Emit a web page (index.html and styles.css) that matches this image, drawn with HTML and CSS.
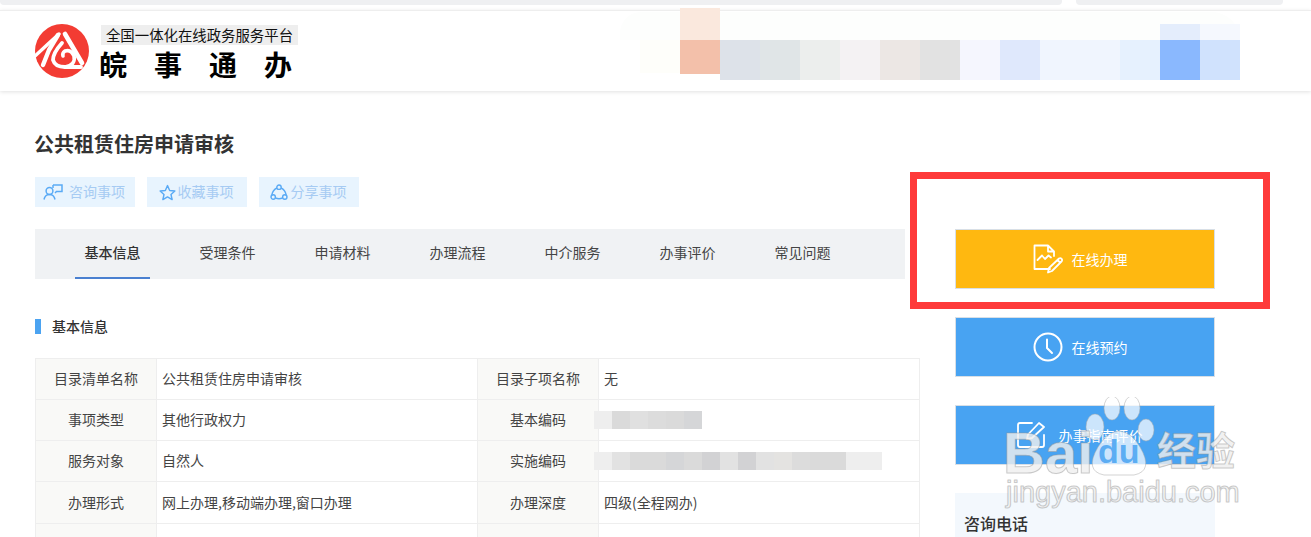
FILE: index.html
```html
<!DOCTYPE html>
<html lang="zh-CN">
<head>
<meta charset="utf-8">
<title>公共租赁住房申请审核</title>
<link rel="stylesheet" href="styles.css">
</head>
<body>
<div class="topbar"><div class="tb-a"></div><div class="tb-b"></div></div>
<header class="header">
  <svg class="logo" viewBox="0 0 54 54" width="54" height="54">
    <circle cx="27" cy="27" r="27" fill="#f33c33"/>
    <g fill="none" stroke="#fff" stroke-linejoin="round" stroke-linecap="round">
      <path d="M0 32 L13 20 L24 10" stroke-width="3.4"/>
      <path d="M23 11 L14 26 L8 41" stroke-width="4.4"/>
      <path d="M30 10 L47 39" stroke-width="4.6"/>
      <path d="M27 19 Q18 29 18 36 Q20 43 30 43 L46 43" stroke-width="3.8"/>
      <path d="M30 43 Q41 41 39 32 Q36 25 30 27 Q27 29 28 32" stroke-width="3.6"/>
    </g>
  </svg>
  <div class="brand">
    <div class="brand-sub">全国一体化在线政务服务平台</div>
    <div class="brand-name">皖事通办</div>
  </div>
</header>

<div class="mosaic">
  <div class="m-halo"></div>
  <div class="m-halo2"></div>
  <div class="m-top1"></div>
  <div class="m-top2"></div>
  <div class="m-top3"></div>
  <div class="m-b m1"></div><div class="m-b m2"></div><div class="m-b m3"></div><div class="m-b m4"></div>
  <div class="m-b m5"></div><div class="m-b m6"></div><div class="m-b m7"></div><div class="m-b m8"></div>
  <div class="m-b m9"></div><div class="m-b m10"></div><div class="m-b m11"></div><div class="m-b m12"></div>
  <div class="m-b m13"></div><div class="m-b m14"></div>
</div>

<main class="main">
  <section class="content">
    <h1 class="title">公共租赁住房申请审核</h1>
    <div class="actions">
      <a class="action a1">
        <svg viewBox="0 0 20 16" width="20" height="16" fill="none" stroke="#5aaaf5" stroke-width="1.5">
          <circle cx="6.5" cy="7" r="3.4"/>
          <path d="M1 15.5 Q2 10.5 6.5 10.5 Q11 10.5 12 15.5"/>
          <path d="M10 1 H19 V7.5 H13.5 L12 9 M10 1 V4"/>
        </svg>
        <span>咨询事项</span>
      </a>
      <a class="action a2">
        <svg viewBox="0 0 18 17" width="17" height="17" fill="none" stroke="#5aaaf5" stroke-width="1.5" stroke-linejoin="round">
          <path d="M9 1.2 L11.3 6.3 L16.8 6.9 L12.7 10.6 L13.9 16 L9 13.2 L4.1 16 L5.3 10.6 L1.2 6.9 L6.7 6.3 Z"/>
        </svg>
        <span>收藏事项</span>
      </a>
      <a class="action a3">
        <svg viewBox="0 0 18 17" width="18" height="17" fill="none" stroke="#5aaaf5" stroke-width="1.4">
          <circle cx="9" cy="3.2" r="2.2"/>
          <circle cx="3.2" cy="13" r="2.2"/>
          <circle cx="14.8" cy="13" r="2.2"/>
          <path d="M6.9 4 Q2.8 6 1.8 11 M11.1 4 Q15.2 6 16.2 11 M5.4 14 Q9 15.4 12.6 14"/>
        </svg>
        <span>分享事项</span>
      </a>
    </div>
    <nav class="tabs">
      <a class="tab active">基本信息</a>
      <a class="tab">受理条件</a>
      <a class="tab">申请材料</a>
      <a class="tab">办理流程</a>
      <a class="tab">中介服务</a>
      <a class="tab">办事评价</a>
      <a class="tab">常见问题</a>
    </nav>
    <h2 class="section">基本信息</h2>
    <table class="info">
      <colgroup><col class="c-l"><col class="c-v"><col class="c-l"><col class="c-v"></colgroup>
      <tr><th>目录清单名称</th><td>公共租赁住房申请审核</td><th>目录子项名称</th><td>无</td></tr>
      <tr><th>事项类型</th><td>其他行政权力</td><th>基本编码</th><td>
        <div class="blur"><i class="g1"></i><i class="g2"></i><i class="g3"></i><i class="g4"></i><i class="g2"></i><i class="g5"></i></div>
      </td></tr>
      <tr><th>服务对象</th><td>自然人</td><th>实施编码</th><td>
        <div class="blur"><i class="g1"></i><i class="g6"></i><i class="g2"></i><i class="g2"></i><i class="g5"></i><i class="g2"></i><i class="g7"></i><i class="g6"></i><i class="g7"></i><i class="g6"></i><i class="g8"></i><i class="g4"></i><i class="g2"></i><i class="g2"></i><i class="g1"></i><i class="g1"></i></div>
      </td></tr>
      <tr class="r4"><th>办理形式</th><td>网上办理,移动端办理,窗口办理</td><th>办理深度</th><td>四级(全程网办)</td></tr>
      <tr><th></th><td></td><th></th><td></td></tr>
    </table>
  </section>

  <aside class="side">
    <a class="btn btn-yellow">
      <svg viewBox="0 0 30 30" width="30" height="30" fill="none" stroke="#fff" stroke-width="1.8" stroke-linejoin="round" stroke-linecap="round">
        <path d="M17 25 H1.5 V1.5 H15 L21 7.5 V12 M15 1.5 V7.5 H21"/>
        <path d="M4.5 16 L9 11.5 L12 15 L15.5 11.5 L18 13.5"/>
        <path d="M15 28.5 L16 24 L26 14.5 Q27.5 13.5 28.8 15 Q29.5 16.5 28.5 17.5 L19 27 Z M24.5 16 L27 18.5"/>
      </svg>
      <span>在线办理</span>
    </a>
    <a class="btn btn-blue">
      <svg viewBox="0 0 30 30" width="30" height="30" fill="none" stroke="#fff" stroke-linecap="round" stroke-linejoin="round">
        <circle cx="15" cy="15" r="13.5" stroke-width="2"/>
        <path d="M14 7.5 V16 L19 21" stroke-width="2"/>
      </svg>
      <span>在线预约</span>
    </a>
    <a class="btn btn-blue btn-wide">
      <svg viewBox="0 0 28 28" width="28" height="28" fill="none" stroke="#fff" stroke-width="1.8" stroke-linejoin="round" stroke-linecap="round">
        <path d="M15 2 H3 Q1 2 1 4 V24 Q1 26 3 26 H25 Q27 26 27 24 V14"/>
        <path d="M10 18 L11 13.5 L22 2 L27 6 L15 17 Z"/>
      </svg>
      <span>办事指南评价</span>
    </a>
    <div class="panel"><h3>咨询电话</h3></div>
  </aside>
</main>

<div class="redbox"></div>

<div class="watermark">
  <svg class="paw" viewBox="0 0 72 84" width="72" height="84">
    <g fill="#fff" fill-opacity=".72" stroke="#aaa" stroke-opacity=".5">
      <ellipse cx="11" cy="30" rx="9" ry="13"/>
      <ellipse cx="28" cy="11" rx="8" ry="12"/>
      <ellipse cx="48" cy="11" rx="8" ry="12"/>
      <ellipse cx="62" cy="33" rx="8" ry="11"/>
      <path d="M36 34 Q48 36 56 50 Q70 74 50 78 L20 78 Q0 74 14 50 Q24 34 36 34 Z"/>
    </g>
  </svg>
  <span class="w-bai">Bai</span>
  <span class="w-du">du</span>
  <span class="w-cn">经验</span>
  <span class="w-url">jingyan.baidu.com</span>
</div>
</body>
</html>
```
FILE: styles.css
```css
html, body {
  margin: 0;
  height: 537px;
  overflow: hidden;
  background: #fff;
}
body {
  position: relative;
  font-family: "Noto Sans CJK SC", "Liberation Sans", sans-serif;
  font-size: 14px;
  color: #333;
}
.topbar {
  display: flex;
  height: 5px;
  margin-bottom: 5px;
}
.tb-a, .tb-b {
  background: #eff0f2;
  border-radius: 0 0 4px 4px;
}
.tb-a { width: 1062px; margin-right: 14px; }
.tb-b { width: 207px; }

.header {
  display: flex;
  align-items: flex-start;
  height: 67px;
  padding: 13px 0 0 35px;
  border-top: 1px solid #eee;
  box-shadow: 0 1px 4px rgba(0, 0, 0, .12);
}
.logo { flex: none; }
.brand { margin: 1px 0 0 12px; }
.brand-sub {
  width: 197px;
  height: 20px;
  line-height: 20px;
  background: #eee;
  font-size: 14.4px;
  text-align: center;
  color: #111;
  white-space: nowrap;
}
.brand-name {
  margin: 2px 0 0 -2px;
  height: 34px;
  line-height: 34px;
  font-size: 28px;
  font-weight: 700;
  letter-spacing: 27px;
  color: #000;
  white-space: nowrap;
}

/* pixelated redaction over the header */
.mosaic { position: absolute; left: 620px; top: 8px; width: 640px; height: 80px; }
.m-halo { position: absolute; left: 0; top: 4px; width: 620px; height: 28px; background: #fdfefd; border-radius: 30px 40px 0 0; }
.m-halo2 { position: absolute; left: 20px; top: 32px; width: 40px; height: 33px; background: #fefefa; }
.m-top1 { position: absolute; left: 60px; top: 0; width: 40px; height: 32px; background: #fae8dd; }
.m-top2 { position: absolute; left: 540px; top: 16px; width: 40px; height: 16px; background: #e4edfc; }
.m-top3 { position: absolute; left: 580px; top: 16px; width: 40px; height: 16px; background: #f5f8fe; }
.m-b { position: absolute; top: 32px; width: 40px; height: 40px; }
.m1 { left: 60px; height: 34px; background: #f3c0aa; }
.m2 { left: 100px; background: #dde2e9; }
.m3 { left: 140px; background: #e0e5e7; }
.m4 { left: 180px; background: #eceeed; }
.m5 { left: 220px; background: #f4f2f3; }
.m6 { left: 260px; background: #ece7e4; }
.m7 { left: 300px; background: #e2e2e2; }
.m8 { left: 340px; background: #f5f6fe; }
.m9 { left: 380px; background: #dfe8fc; }
.m10 { left: 420px; background: #f0f5fe; }
.m11 { left: 460px; background: #f0f5fe; }
.m12 { left: 500px; background: #e6f1fe; }
.m13 { left: 540px; background: #8ab8fe; }
.m14 { left: 580px; background: #d0e2fd; }

.main {
  display: flex;
  align-items: flex-start;
  padding: 38px 0 0 35px;
}
.content { width: 885px; flex: none; }
.title {
  margin: 0 0 0 -1px;
  font-size: 20px;
  line-height: 30px;
  font-weight: 700;
  color: #333;
}
.actions {
  display: flex;
  gap: 12px;
  margin-top: 18px;
}
.action {
  display: flex;
  align-items: center;
  justify-content: center;
  width: 100px;
  height: 30px;
  padding-right: 2px;
  box-sizing: border-box;
  background: #e8f4fe;
  color: #a6cbf3;
}
.action span { margin-bottom: 2px; }
.a1 { gap: 6px; }
.a2 { gap: 2px; }
.a3 { gap: 3px; }

.tabs {
  display: flex;
  gap: 40px;
  width: 870px;
  height: 50px;
  margin-top: 22px;
  padding-left: 40px;
  box-sizing: border-box;
  background: #f0f2f4;
}
.tab {
  width: 75px;
  height: 48px;
  line-height: 46px;
  text-align: center;
  color: #444;
}
.tab.active {
  font-weight: 500;
  color: #333;
  border-bottom: 2px solid #4a80d0;
}
.section {
  margin: 40px 0 24px;
  height: 15px;
  line-height: 15px;
  padding-left: 11px;
  border-left: 6px solid #4ba3f1;
  font-size: 14px;
  font-weight: 500;
  color: #333;
}
.info {
  width: 884px;
  table-layout: fixed;
  border-collapse: collapse;
}
.c-l { width: 121px; }
.c-v { width: 321px; }
.info th, .info td {
  height: 38px;
  padding: 0 5px 2px;
  border: 1px solid #eee;
  box-sizing: content-box;
  font-size: 14px;
  font-weight: 400;
  color: #444;
  white-space: nowrap;
}
.info th { background: #f9f9f7; text-align: center; }
.info td { text-align: left; }
.info .r4 th, .info .r4 td { height: 39px; }
.blur { display: flex; margin: 2px 0 0 -10px; }
.blur i { width: 18px; height: 18px; }
.g1 { background: #eeeeee; }
.g2 { background: #dadada; }
.g3 { background: #e0e0e0; }
.g4 { background: #dcdcdc; }
.g5 { background: #d5d6d8; }
.g6 { background: #e2e2e2; }
.g7 { background: #d2d2d4; }
.g8 { background: #e4e3e1; }

.side {
  width: 260px;
  margin: 100px 0 0 35px;
  flex: none;
  display: flex;
  flex-direction: column;
  gap: 28px;
}
.btn {
  display: flex;
  align-items: center;
  justify-content: center;
  gap: 9px;
  height: 60px;
  padding-right: 10px;
  box-sizing: border-box;
  border: 1px solid #d8dfe6;
  color: #fff;
  font-size: 14px;
}
.btn-wide { gap: 14px; padding-right: 11px; }
.btn-yellow { background: #ffb810; }
.btn-blue { background: #48a3f2; }
.panel {
  height: 100px;
  padding: 17px 9px;
  box-sizing: border-box;
  background: #f3f8fd;
}
.panel h3 {
  margin: 0;
  font-size: 16px;
  line-height: 26px;
  font-weight: 500;
  color: #333;
}

/* annotation and watermark lying on the screenshot */
.redbox {
  position: absolute;
  left: 910px;
  top: 172px;
  width: 346px;
  height: 123px;
  border: 7px solid #fe3a3a;
}
.watermark {
  position: absolute;
  left: 1000px;
  top: 395px;
  width: 250px;
  height: 125px;
  font-family: "Liberation Sans", sans-serif;
  pointer-events: none;
}
.watermark span {
  position: absolute;
  white-space: nowrap;
  color: rgba(255, 255, 255, .72);
  -webkit-text-stroke: 1px rgba(150, 150, 150, .45);
  text-shadow: 0 0 1px rgba(120, 120, 120, .35);
}
.paw { position: absolute; left: 84px; top: 2px; }
.w-bai { left: 3px; top: 28px; font-size: 58px; line-height: 60px; font-weight: 700; }
.watermark .w-du { left: 98px; top: 38px; font-size: 34px; line-height: 36px; font-weight: 700; color: rgba(72, 163, 242, .85); -webkit-text-stroke: 0; text-shadow: none; }
.w-cn { left: 157px; top: 28px; font-family: "Noto Sans CJK SC", sans-serif; font-size: 39px; line-height: 50px; font-weight: 700; }
.w-url { left: 6px; top: 80px; font-size: 29px; line-height: 34px; }
```
